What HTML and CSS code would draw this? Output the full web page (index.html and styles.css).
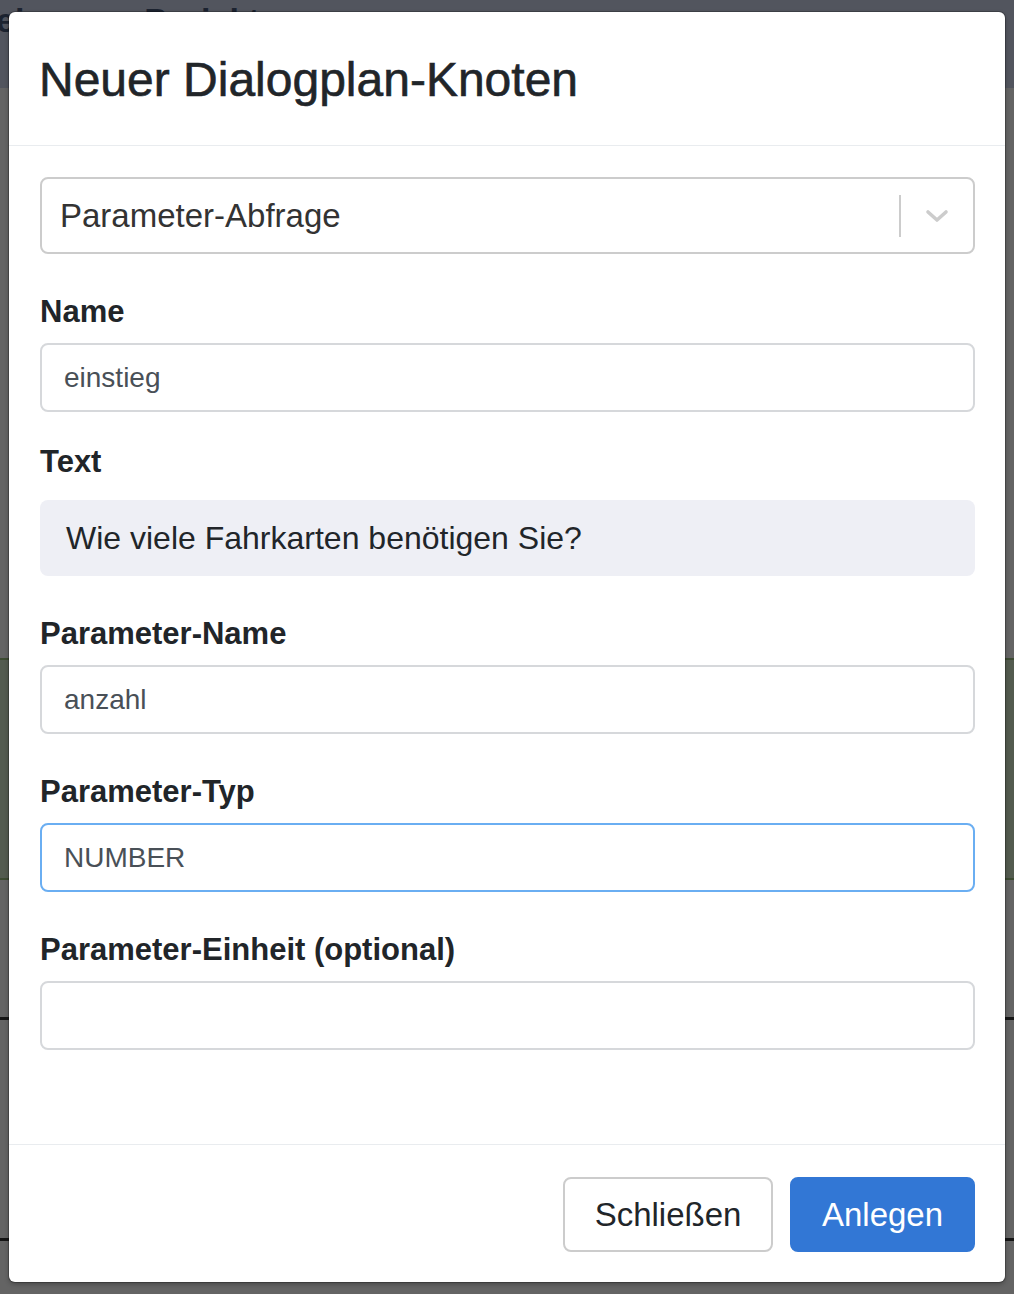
FILE: index.html
```html
<!DOCTYPE html>
<html lang="de">
<head>
<meta charset="utf-8">
<title>Neuer Dialogplan-Knoten</title>
<link rel="stylesheet" href="styles.css">
</head>
<body>
<div class="page">
  <div class="topbar"><span class="tb-a">ei</span><span class="tb-b">Projekt</span></div>
  <div class="green"></div>
  <div class="rule r1"></div>
  <div class="rule r2"></div>
</div>

<div class="modal">
  <div class="modal-header">
    <h4 class="modal-title">Neuer Dialogplan-Knoten</h4>
  </div>
  <div class="modal-body">
    <div class="select">
      <span class="select-value">Parameter-Abfrage</span>
      <span class="select-sep"></span>
      <span class="select-ind">
        <svg width="24" height="14" viewBox="0 0 24 14"><polyline points="3,3 12,11 21,3" fill="none" stroke="#cccccc" stroke-width="3.6" stroke-linecap="round" stroke-linejoin="round"/></svg>
      </span>
    </div>

    <label class="label">Name</label>
    <div class="input">einstieg</div>

    <label class="label text-label">Text</label>
    <div class="display">Wie viele Fahrkarten benötigen Sie?</div>

    <label class="label">Parameter-Name</label>
    <div class="input">anzahl</div>

    <label class="label">Parameter-Typ</label>
    <div class="input focus">NUMBER</div>

    <label class="label">Parameter-Einheit (optional)</label>
    <div class="input"></div>
  </div>
  <div class="modal-footer">
    <button class="btn btn-secondary">Schließen</button>
    <button class="btn btn-primary">Anlegen</button>
  </div>
</div>
</body>
</html>
```
FILE: styles.css
```css
* {
  box-sizing: border-box;
}

html, body {
  margin: 0;
  padding: 0;
}

body {
  width: 1014px;
  height: 1294px;
  overflow: hidden;
  background: #646464;
  font-family: "Liberation Sans", Arial, Helvetica, sans-serif;
  color: #212529;
}

/* dimmed page behind the dialog */
.page {
  height: 1294px;
  display: flex;
  flex-direction: column;
}

.topbar {
  height: 88px;
  background: #52555e;
  display: flex;
  align-items: flex-start;
  gap: 120px;
  font-size: 34px;
  font-weight: 700;
  color: #1c2330;
  line-height: 40px;
  padding-top: 0;
}

.tb-a {
  margin-left: -4px;
}

.green {
  margin-top: 570px;
  height: 222px;
  border-top: 2px solid #3d4b32;
  border-bottom: 2px solid #3d4b32;
  background: #535b4f;
}

.rule {
  height: 3px;
  background: #151515;
}

.r1 {
  margin-top: 137px;
}

.r2 {
  margin-top: 218px;
}

/* dialog */
.modal {
  position: absolute;
  left: 9px;
  top: 12px;
  width: 996px;
  height: 1270px;
  background: #ffffff;
  border-radius: 6px;
  box-shadow: 0 0 0 1px rgba(0, 0, 0, 0.22), 0 2px 5px rgba(0, 0, 0, 0.3);
  display: flex;
  flex-direction: column;
  overflow: hidden;
}

.modal-header {
  height: 134px;
  padding: 39px 28px 0 30px;
  border-bottom: 1px solid #e9ecef;
}

.modal-title {
  margin: 0;
  font-size: 48px;
  font-weight: 400;
  line-height: 58px;
  color: #212529;
  -webkit-text-stroke: 0.6px #212529;
}

.modal-body {
  flex: 1;
  padding: 31px 30px 0 31px;
}

.select {
  height: 77px;
  border: 2px solid #cccccc;
  border-radius: 8px;
  display: flex;
  align-items: center;
  padding-left: 18px;
}

.select-value {
  flex: 1;
  font-size: 33px;
  color: #333333;
}

.select-sep {
  width: 2px;
  height: 42px;
  background: #cccccc;
}

.select-ind {
  width: 72px;
  display: flex;
  justify-content: center;
  align-items: center;
}

.label {
  display: block;
  font-size: 31px;
  font-weight: 700;
  line-height: 40px;
  margin: 38px 0 11px;
  color: #212529;
}

.text-label {
  margin: 30px 0 18px;
}

.input {
  height: 69px;
  border: 2px solid #d6d8db;
  border-radius: 8px;
  padding: 0 22px;
  font-size: 28px;
  color: #495057;
  display: flex;
  align-items: center;
}

.input.focus {
  border-color: #6aaef2;
}

.display {
  height: 76px;
  background: #eeeff5;
  border-radius: 8px;
  padding: 0 26px;
  font-size: 32px;
  color: #212529;
  display: flex;
  align-items: center;
}

.modal-footer {
  border-top: 1px solid #e9ecef;
  padding: 32px 30px 30px;
  display: flex;
  justify-content: flex-end;
  gap: 17px;
}

.btn {
  height: 75px;
  border-radius: 8px;
  font-family: "Liberation Sans", Arial, Helvetica, sans-serif;
  font-size: 33px;
  line-height: 1;
  display: flex;
  align-items: center;
  justify-content: center;
  padding: 0;
  cursor: pointer;
}

.btn-secondary {
  width: 210px;
  background: #ffffff;
  border: 2px solid #cccccc;
  color: #212529;
}

.btn-primary {
  width: 185px;
  background: #3277d5;
  border: 2px solid #3277d5;
  color: #ffffff;
}
```
